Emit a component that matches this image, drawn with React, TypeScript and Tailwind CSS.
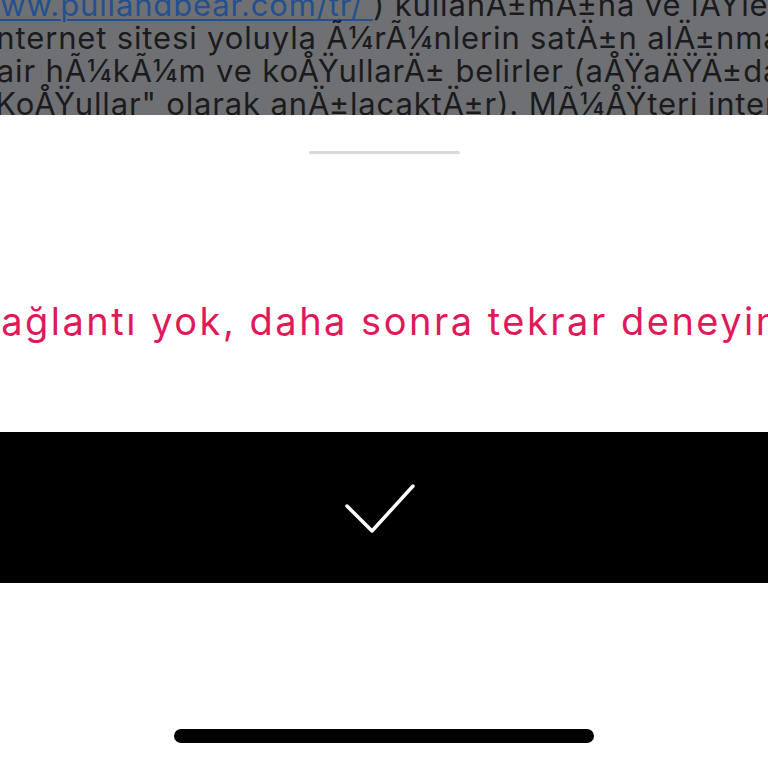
const bg = 'font-["Inter","Liberation_Sans",sans-serif]';

function DimmedPage() {
  return (
    <div className={`h-[115px] shrink-0 overflow-hidden bg-[#6f7073] text-[31px] leading-[33px] tracking-[0.85px] text-[#1b1b1d] ${bg}`}>
      <div className="-mt-[12px] whitespace-nowrap">
        <div className="-ml-[26px]">
          <span className="text-[#24508f] underline decoration-[2px] underline-offset-[3px]">www.pullandbear.com/tr/ </span>
          ) kullanÄ±mÄ±na ve iÅŸlem
        </div>
        <div className="-ml-[12px]">internet sitesi yoluyla Ã¼rÃ¼nlerin satÄ±n alÄ±nmasÄ</div>
        <div className="-ml-[23px]">dair hÃ¼kÃ¼m ve koÅŸullarÄ± belirler (aÅŸaÄŸÄ±da</div>
        <div className="-ml-[20px]">"KoÅŸullar" olarak anÄ±lacaktÄ±r). MÃ¼ÅŸteri internet</div>
      </div>
    </div>
  );
}

function CheckIcon() {
  return (
    <svg className="-ml-[8px]" width="70" height="50" viewBox="0 0 70 50" fill="none">
      <path d="M2 23 L27 48 L68 3" stroke="white" strokeWidth="3.5" strokeLinecap="round" strokeLinejoin="round" />
    </svg>
  );
}

export default function App() {
  return (
    <div className="flex h-[768px] w-[768px] flex-col overflow-hidden bg-white">
      <DimmedPage />
      <div className={`flex flex-1 flex-col items-center bg-white ${bg}`}>
        <div className="mt-[36px] h-[3px] w-[151px] rounded-full bg-[#d9d9d9]" />
        <div className="mt-[144px] flex w-full justify-center overflow-hidden">
          <p className="whitespace-nowrap text-[38px] leading-[46px] tracking-[2.5px] text-[#e0195a]">
            Bağlantı yok, daha sonra tekrar deneyin.
          </p>
        </div>
        <button className="mt-[88px] flex h-[151px] w-full items-center justify-center bg-black">
          <CheckIcon />
        </button>
        <div className="mt-[146px] h-[14px] w-[420px] rounded-full bg-black" />
      </div>
    </div>
  );
}
